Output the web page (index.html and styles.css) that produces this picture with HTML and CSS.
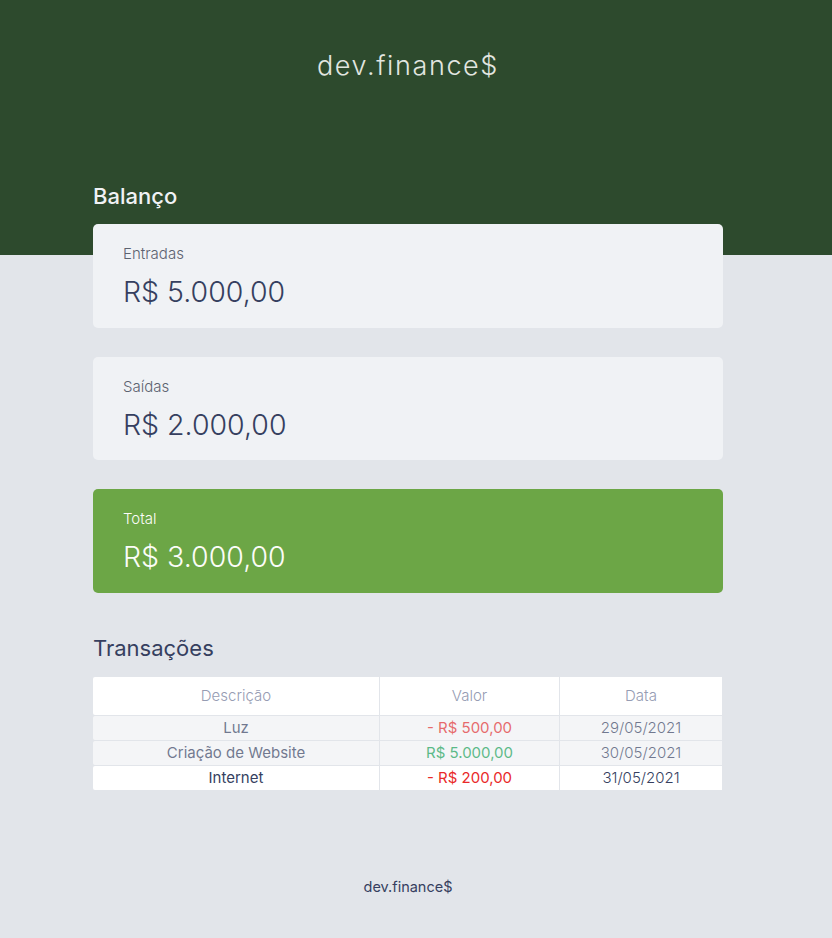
FILE: index.html
```
<!DOCTYPE html>
<html lang="pt-BR">
<head>
<meta charset="utf-8">
<title>dev.finance$</title>
<link rel="stylesheet" href="styles.css">
</head>
<body>
<header class="header">
  <h1 class="logo">dev.finance$</h1>
</header>
<div class="page">
<main class="container">
  <section class="balance">
    <h2 class="balance-title">Balanço</h2>
    <div class="card">
      <h3 class="card-label">Entradas</h3>
      <p class="card-value">R$ 5.000,00</p>
    </div>
    <div class="card">
      <h3 class="card-label">Saídas</h3>
      <p class="card-value">R$ 2.000,00</p>
    </div>
    <div class="card card-total">
      <h3 class="card-label">Total</h3>
      <p class="card-value">R$ 3.000,00</p>
    </div>
  </section>
  <section class="transactions">
    <h2 class="transactions-title">Transações</h2>
    <table class="data-table">
      <thead>
        <tr>
          <th class="col-desc">Descrição</th>
          <th class="col-value">Valor</th>
          <th class="col-date">Data</th>
        </tr>
      </thead>
      <tbody>
        <tr class="faded">
          <td class="description">Luz</td>
          <td class="expense">- R$ 500,00</td>
          <td class="date">29/05/2021</td>
        </tr>
        <tr class="faded">
          <td class="description">Criação de Website</td>
          <td class="income">R$ 5.000,00</td>
          <td class="date">30/05/2021</td>
        </tr>
        <tr>
          <td class="description">Internet</td>
          <td class="expense">- R$ 200,00</td>
          <td class="date">31/05/2021</td>
        </tr>
      </tbody>
    </table>
  </section>
</main>
<footer class="footer">
  <p class="footer-text">dev.finance$</p>
</footer>
</div>
</body>
</html>
```
FILE: styles.css
```
* { box-sizing: border-box; }
html { font-size: 15px; }
body {
  margin: 0;
  background: #e2e5ea;
  font-family: Inter, "Open Sans", sans-serif;
  color: #363f5f;
}
.header {
  background: #2d4a2d;
  height: 255px;
  padding: 46px 16px 0 0;
  text-align: center;
}
.logo {
  margin: 0;
  font-size: 27px;
  line-height: 40px;
  font-weight: 300;
  color: #e2e6e0;
  letter-spacing: 1.6px;
}
.page {
  padding-right: 16px;
}
.container {
  width: 630px;
  margin: 0 auto;
}
.balance {
  margin-top: -75px;
}
.balance-title {
  margin: 0 0 12px;
  font-size: 22px;
  line-height: 32px;
  font-weight: 500;
  color: #f0f2f5;
}
.card {
  background: #f0f2f5;
  border-radius: 5px;
  height: 103.5px;
  padding: 20px 30px 0;
  margin-bottom: 29px;
}
.card-label {
  margin: 0;
  font-size: 15px;
  line-height: 20px;
  font-weight: 300;
  color: #5c6270;
}
.card-value {
  margin: 8px 0 0;
  font-size: 28.5px;
  line-height: 40px;
  font-weight: 300;
  color: #363f5f;
}
.card-total {
  background: #6ca646;
}
.card-total .card-label,
.card-total .card-value {
  color: #fbfcf8;
}
.transactions {
  padding-top: 10px;
}
.transactions-title {
  margin: 0 0 12px;
  font-size: 22px;
  line-height: 32px;
  font-weight: 400;
  color: #363f5f;
}
.data-table {
  width: 631px;
  margin-left: -1px;
  border-collapse: separate;
  border-spacing: 1px;
  font-size: 15px;
}
.data-table th,
.data-table td {
  background: #ffffff;
  text-align: center;
  padding: 0;
}
.data-table th {
  height: 38px;
  font-weight: 300;
  color: #969cb3;
}
.data-table td {
  height: 24px;
}
.data-table tr > :first-child {
  border-radius: 2px 0 0 2px;
}
.col-desc { width: 286px; }
.col-value { width: 179px; }
.description { color: #363f5f; }
.expense { color: #e92929; }
.income { color: #12a454; }
.date { font-weight: 300; color: #363f5f; }
.faded { opacity: 0.65; }
.footer {
  padding-top: 86px;
  text-align: center;
}
.footer-text {
  margin: 0;
  font-size: 14.5px;
  line-height: 20px;
  color: #363f5f;
}
```
